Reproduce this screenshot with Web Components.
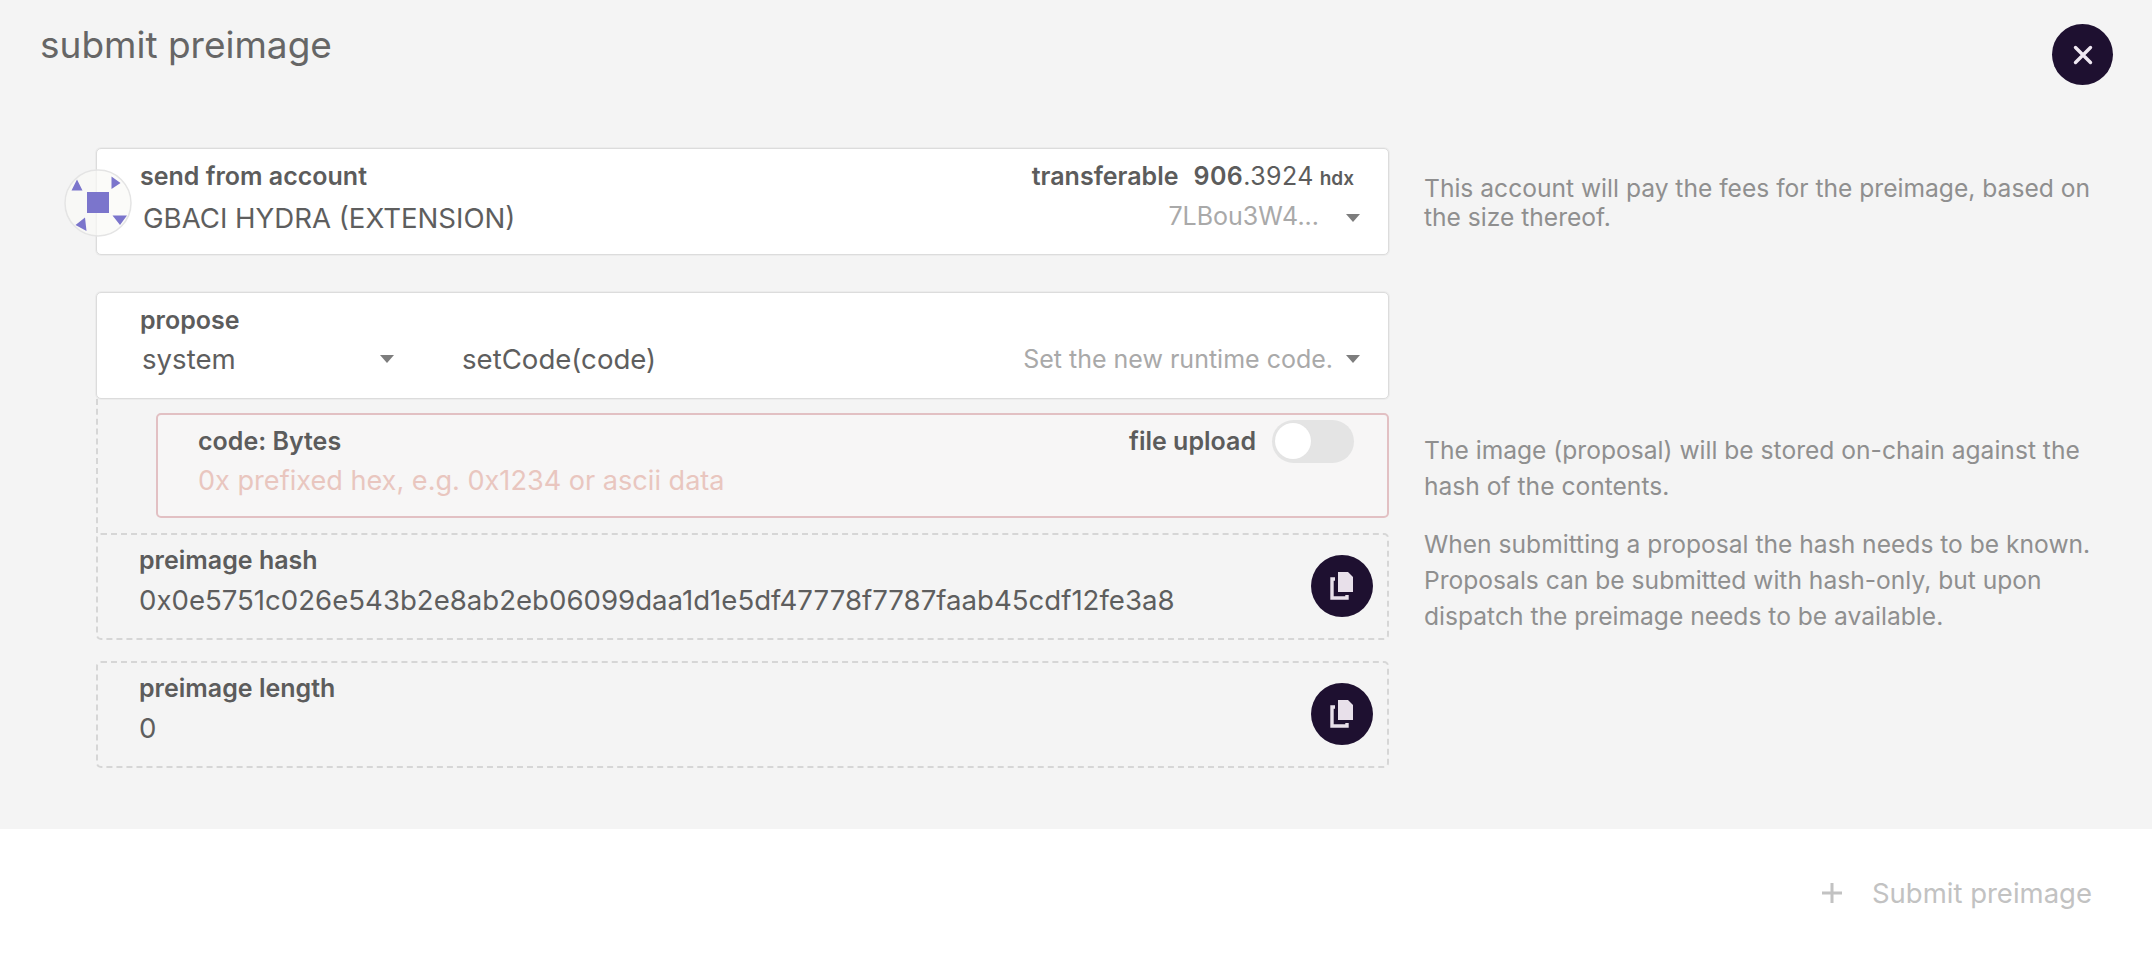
<!DOCTYPE html>
<html><head><meta charset="utf-8">
<style>
html,body{margin:0;padding:0;height:100%;background:#f4f4f4;font-family:Inter,"Liberation Sans",sans-serif;}
</style></head>
<body>
<preimage-modal heading="submit preimage">
  <form-section>
    <account-field label="send from account" name="GBACI HYDRA (EXTENSION)" avail-int="906" avail-dec=".3924" unit="hdx" address="7LBou3W4..."></account-field>
    <span slot="help">This account will pay the fees for the preimage, based on the size thereof.</span>
  </form-section>
  <form-section>
    <propose-field label="propose" section="system" method="setCode(code)" desc="Set the new runtime code."></propose-field>
    <params-indent><code-field label="code: Bytes" placeholder="0x prefixed hex, e.g. 0x1234 or ascii data" toggle="file upload"></code-field></params-indent>
    <output-field label="preimage hash" value="0x0e5751c026e543b2e8ab2eb06099daa1d1e5df47778f7787faab45cdf12fe3a8"></output-field>
    <output-field label="preimage length" value="0" style="margin-top:21px"></output-field>
    <help-stack slot="help">
      <p>The image (proposal) will be stored on-chain against the hash of the contents.</p>
      <p>When submitting a proposal the hash needs to be known. Proposals can be submitted with hash-only, but upon dispatch the preimage needs to be available.</p>
    </help-stack>
  </form-section>
</preimage-modal>
<script>
const base=`:host{box-sizing:border-box;font-family:Inter,"Liberation Sans",sans-serif}*{box-sizing:border-box}
.label{font-size:25px;font-weight:600;color:#5c5c5c;line-height:30px;white-space:nowrap}
.value{font-size:27.6px;color:#5e5e5e;line-height:40px;white-space:nowrap}
.muted{color:#a9a9a9;font-size:25px}
.caret{width:0;height:0;border:7px solid transparent;border-top:8px solid #7d7d7d;border-bottom:0;flex:none}`;
const frame=`.box{position:relative;height:107px;background:#fff;border:1px solid #dcdcdc;border-radius:5px;padding:12px 28px 0 43px;box-shadow:0 0 0 1px #ececec}`;
function def(name,cls){customElements.define(name,cls)}
class El extends HTMLElement{
  constructor(){super();this.attachShadow({mode:'open'})}
  a(n){return this.getAttribute(n)||''}
}
def('preimage-modal',class extends El{connectedCallback(){this.shadowRoot.innerHTML=`<style>${base}
:host{display:flex;flex-direction:column;height:956px;position:relative;background:#f4f4f4}
header{height:148px;padding:24px 0 0 40px;flex:none}
h1{margin:0;font-size:37px;line-height:42px;font-weight:400;color:#666;letter-spacing:0}
main{flex:1;min-height:0;padding:0 0 0 96px;display:flex;flex-direction:column}
footer{height:127px;background:#fff;display:flex;align-items:center;justify-content:flex-end;padding:1px 60px 0 0;gap:29px;flex:none;color:#c2c2c2;font-size:27.5px}
.close{position:absolute;left:2052px;top:24px;width:61px;height:61px;border-radius:50%;background:#1e1030;border:0;padding:0;display:flex;align-items:center;justify-content:center}
</style>
<header><h1>${this.a('heading')}</h1></header>
<button class="close" aria-label="close"><svg width="20" height="20" viewBox="0 0 20 20"><path d="M2.5 2.5 17.5 17.5M17.5 2.5 2.5 17.5" stroke="#efe8f2" stroke-width="3.4" stroke-linecap="round"/></svg></button>
<main><slot></slot></main>
<footer><svg width="22" height="22" viewBox="0 0 22 22"><path d="M11 1V21M1 11H21" stroke="#c2c2c2" stroke-width="3"/></svg><span>Submit preimage</span></footer>`}});
def('form-section',class extends El{connectedCallback(){this.shadowRoot.innerHTML=`<style>${base}
:host{display:flex;gap:35px;margin-bottom:37px}
.l{width:1293px;flex:none}
.r{width:690px;font-size:24.6px;line-height:29px;color:#8f8f8f;padding-top:26px}
</style><div class="l"><slot></slot></div><div class="r"><slot name="help"></slot></div>`}});
def('help-stack',class extends El{connectedCallback(){this.shadowRoot.innerHTML=`<style>:host{display:block;padding-top:114px;line-height:36px}::slotted(p){margin:0 0 22px}</style><slot></slot>`}});
def('params-indent',class extends El{connectedCallback(){this.shadowRoot.innerHTML=`<style>:host{display:block;padding:14px 0 15px 58px;border-left:2px dashed #d6d6d6}</style><slot></slot>`}});
const idn=`<svg style="position:absolute;left:-33px;top:20px" width="68" height="68" viewBox="0 0 68 68"><circle cx="34" cy="34" r="33" fill="#f9f9f7" fill-opacity=".7" stroke="#e4e4e4" stroke-width="1.5"/><path d="M23 23H45V44H23Z" fill="#7b75cc"/><path d="M7.500 21.500H18.500L13 10.500ZM47.500 7.500 56.500 14 47.500 20ZM48.500 46.500H63L56 56ZM21 48.500 22.500 62 11.500 56Z" fill="#7b75cc"/></svg>`;
def('account-field',class extends El{connectedCallback(){this.shadowRoot.innerHTML=`<style>${base}${frame}
:host{display:block}.top{display:flex;justify-content:space-between}
.bal{display:flex;align-items:baseline;margin-right:6px}
.bal small{font-size:19px;font-weight:600;margin-left:6px}.bal .n{margin-left:15px;letter-spacing:.4px}.bal .d{font-weight:400}
.row{display:flex;justify-content:space-between;align-items:center;padding-left:3px;margin-top:4px}.right{display:flex;align-items:center;gap:27px}
.right .muted{margin-bottom:4px}
</style><div class="box">${idn}<div class="top"><div class="label">${this.a('label')}</div>
<div class="label bal"><span>transferable</span><span class="n">${this.a('avail-int')}<span class="d">${this.a('avail-dec')}</span></span><small>${this.a('unit')}</small></div></div>
<div class="row"><div class="value">${this.a('name')}</div><div class="right"><span class="muted">${this.a('address')}</span><span class="caret"></span></div></div></div>`}});
def('propose-field',class extends El{connectedCallback(){this.shadowRoot.innerHTML=`<style>${base}${frame}
:host{display:block}.row{display:flex;align-items:center;margin-top:4px}.s{width:322px;display:flex;justify-content:space-between;align-items:center;padding:0 68px 0 2px}
.m{flex:1;display:flex;justify-content:space-between;align-items:center}.right{display:flex;align-items:center;gap:13px}
</style><div class="box"><div class="label">${this.a('label')}</div>
<div class="row"><div class="s"><span class="value">${this.a('section')}</span><span class="caret"></span></div>
<div class="m"><span class="value">${this.a('method')}</span><div class="right"><span class="muted">${this.a('desc')}</span><span class="caret"></span></div></div></div></div>`}});
def('code-field',class extends El{connectedCallback(){this.shadowRoot.innerHTML=`<style>${base}${frame}
:host{display:block}.box{background:#f7f6f6;border:2px solid #e2c0c3;box-shadow:none;height:105px;padding:11px 33px 0 40px}
.top{display:flex;justify-content:space-between;align-items:center;height:30px}
.t{display:flex;align-items:center;gap:16px}
.sw{width:82px;height:43px;border-radius:22px;background:#e4e4e4;padding:3px;display:block}.sw i{display:block;width:36px;height:36px;border-radius:50%;background:#fff;box-shadow:0 0 1px #ddd}
.ph{font-size:27.1px;color:#e9c6bf;line-height:40px;margin-top:5px;white-space:nowrap}
</style><div class="box"><div class="top"><div class="label">${this.a('label')}</div><div class="t"><span class="label">${this.a('toggle')}</span><span class="sw"><i></i></span></div></div>
<div class="ph">${this.a('placeholder')}</div></div>`}});
def('output-field',class extends El{connectedCallback(){this.shadowRoot.innerHTML=`<style>${base}${frame}
:host{display:block}.box{background:transparent;border:2px dashed #d6d6d6;box-shadow:none;padding:10px 28px 0 41px}
.value{margin-top:5px}
.copy{position:absolute;right:14px;top:20px;width:62px;height:62px;border-radius:50%;background:#1e1030;border:0;padding:0;display:block}
</style><div class="box"><div class="label">${this.a('label')}</div><div class="value">${this.a('value')}</div>
<button class="copy" aria-label="copy"><svg width="62" height="62" viewBox="0 0 62 62" style="display:block"><path d="M27 17H37L42 22V37H27Z" fill="#e8e0ea"/><path d="M24 24H21V43H36V40" fill="none" stroke="#e8e0ea" stroke-width="3.4"/></svg></button></div>`}});
</script>
</body></html>
